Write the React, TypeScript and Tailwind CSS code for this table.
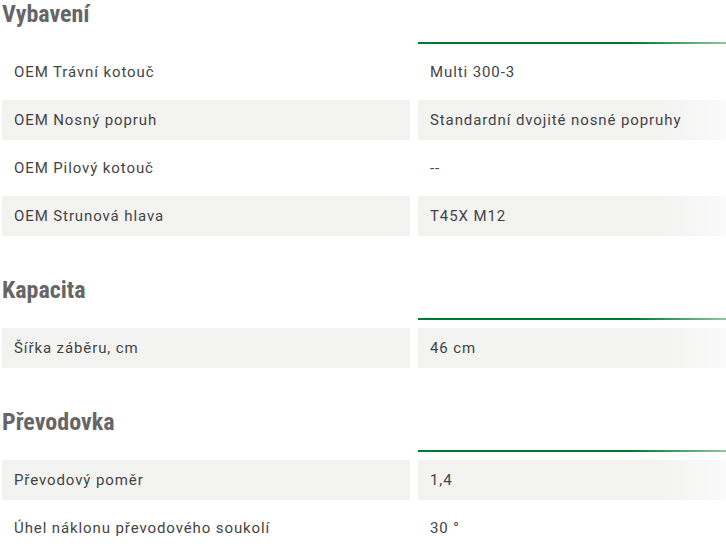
type Row = { label: string; value: string; grey: boolean };

const sections: { title: string; rows: Row[] }[] = [
  {
    title: "Vybavení",
    rows: [
      { label: "OEM Trávní kotouč", value: "Multi 300-3", grey: false },
      { label: "OEM Nosný popruh", value: "Standardní dvojité nosné popruhy", grey: true },
      { label: "OEM Pilový kotouč", value: "--", grey: false },
      { label: "OEM Strunová hlava", value: "T45X M12", grey: true },
    ],
  },
  {
    title: "Kapacita",
    rows: [{ label: "Šířka záběru, cm", value: "46 cm", grey: true }],
  },
  {
    title: "Převodovka",
    rows: [
      { label: "Převodový poměr", value: "1,4", grey: true },
      { label: "Úhel náklonu převodového soukolí", value: "30 °", grey: false },
    ],
  },
];

export default function App() {
  return (
    <div className="w-[726px] h-[546px] overflow-hidden bg-white font-['Roboto',sans-serif] text-[15px] tracking-[0.9px] text-[#444]">
      {sections.map((s, si) => (
        <div key={s.title} className={si === 0 ? "" : "mt-[40px]"}>
          <div className="flex items-end h-[44px]">
            <h2 className="w-[410px] pl-[2px] self-start -mt-[2px] font-['Roboto_Condensed',sans-serif] font-bold text-[24px] leading-[32px] tracking-normal text-[#666]">
              {s.title}
            </h2>
            <div className="ml-[8px] flex-1 h-[2px] bg-[linear-gradient(to_right,#007a33_0%,#007a33_70%,#8fc89c_100%)]" />
          </div>
          <div className="mt-[8px] flex flex-col gap-[8px]">
            {s.rows.map((r) => (
              <div key={r.label} className="flex h-[40px] pl-[2px]">
                <div className={`w-[408px] flex items-center pl-[12px] ${r.grey ? "bg-[#f3f3f2]" : ""}`}>{r.label}</div>
                <div
                  className={`ml-[8px] flex-1 flex items-center pl-[12px] ${
                    r.grey ? "bg-[linear-gradient(to_right,#f3f3f2_0%,#f3f3f2_80%,#fafafa_100%)]" : ""
                  }`}
                >
                  {r.value}
                </div>
              </div>
            ))}
          </div>
        </div>
      ))}
    </div>
  );
}
